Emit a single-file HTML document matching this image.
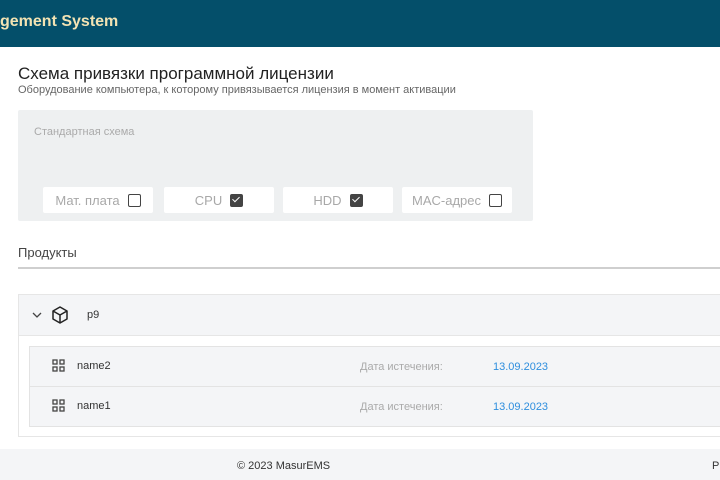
<!DOCTYPE html>
<html><head><meta charset="utf-8"><style>
*{margin:0;padding:0;box-sizing:border-box}
body{width:720px;height:480px;overflow:hidden;background:#fff;font-family:"Liberation Sans",sans-serif;position:relative;color:#333}
.abs{position:absolute}
.hdr{left:0;top:0;width:720px;height:47px;background:#044f6a}
.cb{background:#fff;height:26px;top:187px;width:110px;display:flex;align-items:center;justify-content:center;gap:8px;font-size:13px;color:#a8a8a8;border-radius:2px}
.box{width:13px;height:13px;border:1.5px solid #444;border-radius:2px;background:#fff}
.box.on{background:#444;position:relative}
.box.on:after{content:"";position:absolute;left:3px;top:0px;width:3px;height:6px;border:solid #fff;border-width:0 1.5px 1.5px 0;transform:rotate(45deg)}
.row{left:29px;width:700px;height:41px;background:#f4f5f7;border:1px solid #e3e3e3}
.lbl{font-size:11px;color:#aaa}
.dt{font-size:11px;color:#2e8ede}
</style></head><body>
<div class="abs hdr"></div>
<div class="abs" style="left:0;top:13px;font-size:16px;font-weight:bold;color:#f3e3b3">gement System</div>
<div class="abs" style="left:18px;top:64px;font-size:17px;color:#222">Схема привязки программной лицензии</div>
<div class="abs" style="left:18px;top:84px;font-size:11px;color:#666">Оборудование компьютера, к которому привязывается лицензия в момент активации</div>
<div class="abs" style="left:18px;top:110px;width:515px;height:111px;background:#eef0f1;border-radius:2px"></div>
<div class="abs" style="left:34px;top:126px;font-size:11px;color:#aaa">Стандартная схема</div>
<div class="abs cb" style="left:43px">Мат. плата <span class="box"></span></div>
<div class="abs cb" style="left:164px">CPU <span class="box on"></span></div>
<div class="abs cb" style="left:283px">HDD <span class="box on"></span></div>
<div class="abs cb" style="left:402px">MAC-адрес <span class="box"></span></div>
<div class="abs" style="left:18px;top:245px;font-size:13px;color:#444">Продукты</div>
<div class="abs" style="left:18px;top:267px;width:702px;height:2px;background:#cfcfcf"></div>
<div class="abs" style="left:18px;top:294px;width:710px;height:143px;border:1px solid #e6e6e6;background:#fff"></div>
<div class="abs" style="left:18px;top:294px;width:710px;height:42px;background:#f4f5f7;border:1px solid #e6e6e6"></div>
<svg class="abs" style="left:31px;top:310px" width="12" height="10" viewBox="0 0 12 10"><path d="M2 3l4 4 4-4" fill="none" stroke="#444" stroke-width="1.3"/></svg>
<svg class="abs" style="left:51px;top:305px" width="18" height="20" viewBox="0 0 18 20"><path d="M9 2l7 4v8l-7 4-7-4V6z M2 6l7 4 7-4 M9 10v8" fill="none" stroke="#222" stroke-width="1.5" stroke-linejoin="round"/></svg>
<div class="abs" style="left:87px;top:309px;font-size:11px;color:#333">p9</div>
<div class="abs row" style="top:346px"></div>
<div class="abs row" style="top:386px"></div>
<svg class="abs" style="left:52px;top:359px" width="13" height="13" viewBox="0 0 13 13"><g fill="none" stroke="#444" stroke-width="1.3"><rect x="1" y="1" width="4" height="4"/><rect x="8" y="1" width="4" height="4"/><rect x="1" y="8" width="4" height="4"/><rect x="8" y="8" width="4" height="4"/></g></svg>
<svg class="abs" style="left:52px;top:399px" width="13" height="13" viewBox="0 0 13 13"><g fill="none" stroke="#444" stroke-width="1.3"><rect x="1" y="1" width="4" height="4"/><rect x="8" y="1" width="4" height="4"/><rect x="1" y="8" width="4" height="4"/><rect x="8" y="8" width="4" height="4"/></g></svg>
<div class="abs" style="left:77px;top:360px;font-size:11px;color:#333">name2</div>
<div class="abs" style="left:77px;top:400px;font-size:11px;color:#333">name1</div>
<div class="abs lbl" style="left:360px;top:361px">Дата истечения:</div>
<div class="abs lbl" style="left:360px;top:401px">Дата истечения:</div>
<div class="abs dt" style="left:493px;top:361px">13.09.2023</div>
<div class="abs dt" style="left:493px;top:401px">13.09.2023</div>
<div class="abs" style="left:0;top:449px;width:720px;height:31px;background:#f4f5f7"></div>
<div class="abs" style="left:237px;top:460px;font-size:11px;color:#333">© 2023 MasurEMS</div>
<div class="abs" style="left:712px;top:460px;font-size:11px;color:#333">P</div>
</body></html>
